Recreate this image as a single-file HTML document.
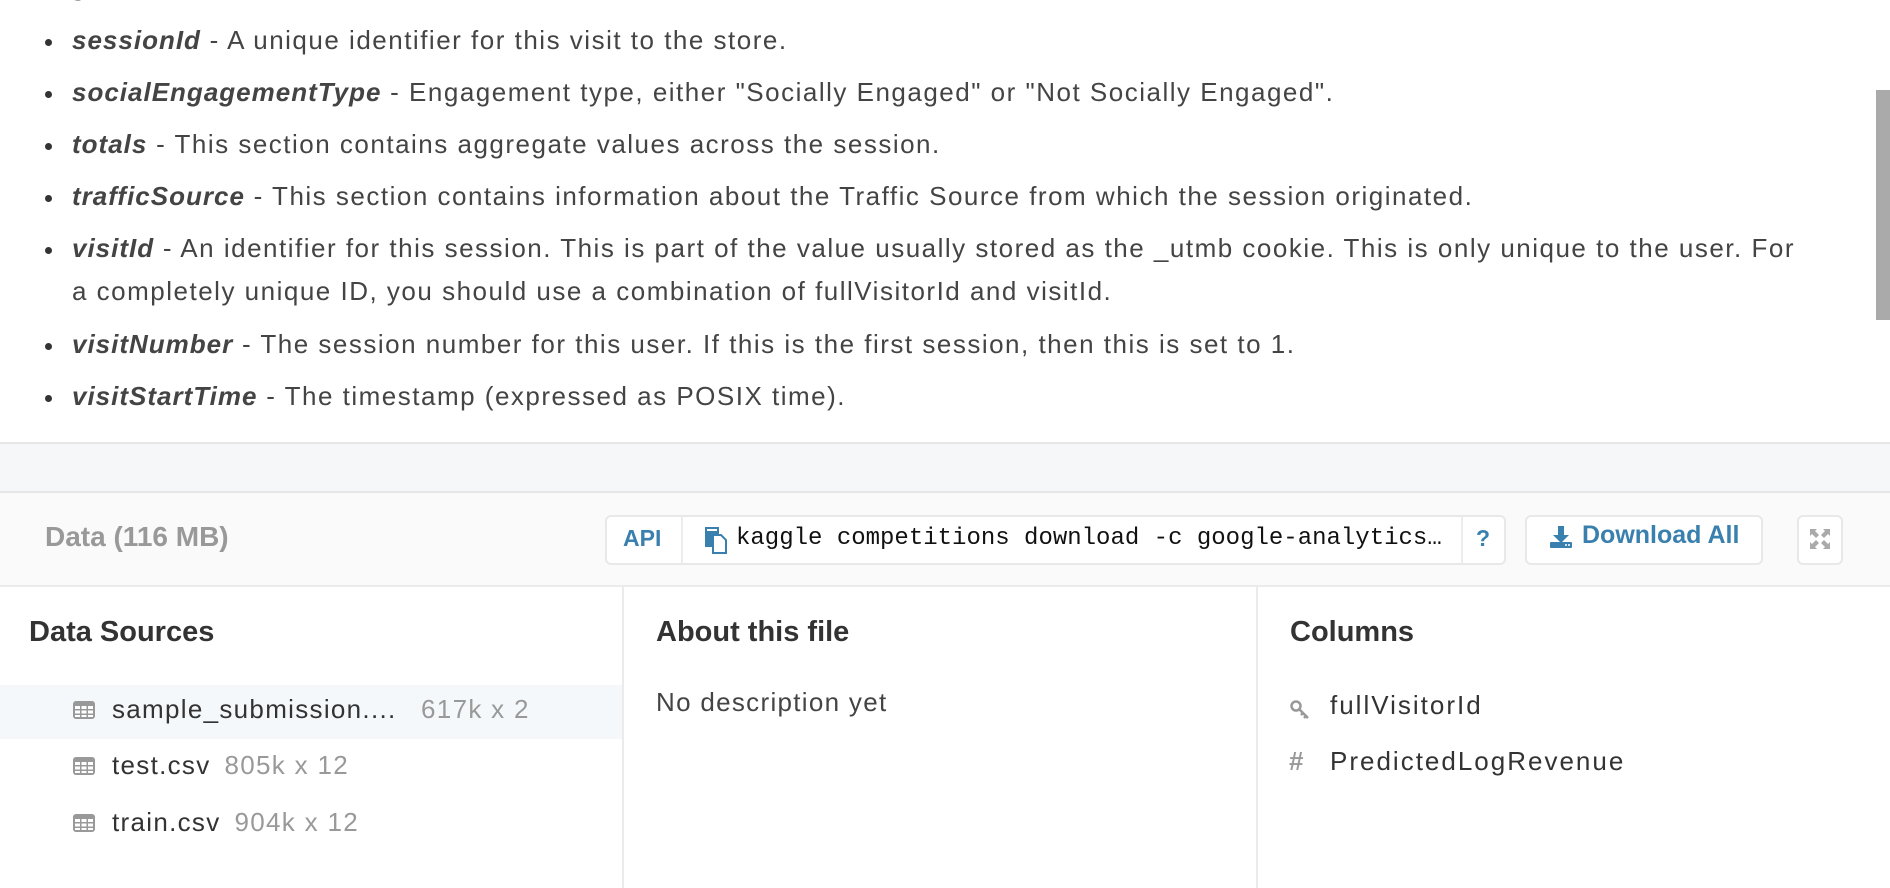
<!DOCTYPE html>
<html><head><meta charset="utf-8"><style>
*{margin:0;padding:0;box-sizing:border-box}
body{width:1890px;height:888px;overflow:hidden;background:#fff;font-family:"Liberation Sans",Arial,sans-serif;color:#444;position:relative}
.list{position:absolute;left:0;top:0;width:1870px}
.li{position:absolute;left:72px;font-size:26px;letter-spacing:1.5px;line-height:52px;white-space:nowrap;color:#444}
.li b{font-style:italic;font-weight:bold;color:#444;letter-spacing:1px}
.li:before{content:"";position:absolute;left:-27px;top:25px;width:7px;height:7px;border-radius:50%;background:#333}
.li.nb:before{display:none}
.sb{position:absolute;left:1876px;top:90px;width:14px;height:230px;background:#aaa}
.band{position:absolute;left:0;top:442px;width:1890px;height:51px;background:#f5f7f8;border-top:2px solid #e4e6e8;border-bottom:2px solid #e4e6e8}
.hdr{position:absolute;left:0;top:493px;width:1890px;height:94px;background:#fafafa;border-bottom:2px solid #ebebeb}
.title{position:absolute;left:45px;top:521px;font-size:28px;font-weight:bold;color:#999}
.box{position:absolute;top:515px;height:50px;border:2px solid #e8e8e8;border-radius:6px;background:#fff}
.blue{color:#3a80ae;font-weight:bold}
.col{position:absolute;top:587px;height:301px;border-left:2px solid #ebebeb}
h3{position:absolute;font-size:29px;font-weight:bold;color:#333}
.row{position:absolute;font-size:26px;letter-spacing:1.3px;white-space:nowrap;color:#333}
.row .g{color:#999;margin-left:14px}
</style></head><body>
<div class="list">
<div class="li nb" style="top:-40px"><b>geoNetwork</b></div>
<div class="li" style="top:14px"><b>sessionId</b> - A unique identifier for this visit to the store.</div>
<div class="li" style="top:66px"><b>socialEngagementType</b> - Engagement type, either "Socially Engaged" or "Not Socially Engaged".</div>
<div class="li" style="top:118px"><b>totals</b> - This section contains aggregate values across the session.</div>
<div class="li" style="top:170px"><b>trafficSource</b> - This section contains information about the Traffic Source from which the session originated.</div>
<div class="li" style="top:222px"><b>visitId</b> - An identifier for this session. This is part of the value usually stored as the _utmb cookie. This is only unique to the user. For</div>
<div class="li nb" style="top:265px">a completely unique ID, you should use a combination of fullVisitorId and visitId.</div>
<div class="li" style="top:318px"><b>visitNumber</b> - The session number for this user. If this is the first session, then this is set to 1.</div>
<div class="li" style="top:370px"><b>visitStartTime</b> - The timestamp (expressed as POSIX time).</div>
</div>
<div class="sb"></div>
<div class="band"></div>
<div class="hdr"></div>
<div class="title">Data (116 MB)</div>
<div class="box" style="left:605px;width:901px"></div>
<div style="position:absolute;left:681px;top:517px;width:2px;height:46px;background:#ececec"></div>
<div style="position:absolute;left:1461px;top:517px;width:2px;height:46px;background:#ececec"></div>
<div class="blue" style="position:absolute;left:623px;top:525px;font-size:23px">API</div>
<svg style="position:absolute;left:704px;top:526px" width="24" height="28" viewBox="0 0 24 28"><rect x="1" y="1" width="14" height="20" fill="#3a80ae"/><rect x="3" y="3" width="10" height="2" fill="#fff"/><path d="M9 9h8l5 5v13H9z" fill="#fff" stroke="#3a80ae" stroke-width="2"/></svg>
<div style="position:absolute;left:736px;top:525px;width:712px;overflow:hidden;text-overflow:ellipsis;font-family:'Liberation Mono',monospace;font-size:24px;color:#111;white-space:nowrap">kaggle competitions download -c google-analytics-customer-revenue-prediction</div>
<div class="blue" style="position:absolute;left:1476px;top:525px;font-size:23px">?</div>
<div class="box" style="left:1525px;width:238px"></div>
<svg style="position:absolute;left:1549px;top:525px" width="24" height="24" viewBox="0 0 24 24"><path d="M9 1h6v9h5l-8 8-8-8h5z" fill="#3a80ae"/><rect x="1" y="17" width="22" height="6" rx="1" fill="#3a80ae"/><circle cx="17" cy="20" r="1" fill="#fff"/><circle cx="20" cy="20" r="1" fill="#fff"/></svg>
<div class="blue" style="position:absolute;left:1582px;top:521px;font-size:25px">Download All</div>
<div class="box" style="left:1797px;width:46px"></div>
<svg style="position:absolute;left:1809px;top:528px" width="22" height="22" viewBox="0 0 22 22" fill="#aaa"><path d="M1 1h7l-2 2 4 4-3 3-4-4-2 2zM21 1v7l-2-2-4 4-3-3 4-4-2-2zM1 21v-7l2 2 4-4 3 3-4 4 2 2zM21 21h-7l2-2-4-4 3-3 4 4 2-2z"/></svg>
<div class="col" style="left:622px"></div>
<div class="col" style="left:1256px"></div>
<h3 style="left:29px;top:616px">Data Sources</h3>
<h3 style="left:656px;top:616px">About this file</h3>
<h3 style="left:1290px;top:616px">Columns</h3>
<div style="position:absolute;left:0;top:685px;width:622px;height:54px;background:#f5f8fb"></div>
<svg style="position:absolute;left:73px;top:701px" width="22" height="18" viewBox="0 0 22 18"><rect x="0" y="0" width="22" height="18" rx="3" fill="#999"/><g fill="#fff"><rect x="2" y="5" width="5" height="3"/><rect x="8.5" y="5" width="5" height="3"/><rect x="15" y="5" width="5" height="3"/><rect x="2" y="9.5" width="5" height="3"/><rect x="8.5" y="9.5" width="5" height="3"/><rect x="15" y="9.5" width="5" height="3"/><rect x="2" y="14" width="5" height="2"/><rect x="8.5" y="14" width="5" height="2"/><rect x="15" y="14" width="5" height="2"/></g></svg>
<svg style="position:absolute;left:73px;top:757px" width="22" height="18" viewBox="0 0 22 18"><rect x="0" y="0" width="22" height="18" rx="3" fill="#999"/><g fill="#fff"><rect x="2" y="5" width="5" height="3"/><rect x="8.5" y="5" width="5" height="3"/><rect x="15" y="5" width="5" height="3"/><rect x="2" y="9.5" width="5" height="3"/><rect x="8.5" y="9.5" width="5" height="3"/><rect x="15" y="9.5" width="5" height="3"/><rect x="2" y="14" width="5" height="2"/><rect x="8.5" y="14" width="5" height="2"/><rect x="15" y="14" width="5" height="2"/></g></svg>
<svg style="position:absolute;left:73px;top:814px" width="22" height="18" viewBox="0 0 22 18"><rect x="0" y="0" width="22" height="18" rx="3" fill="#999"/><g fill="#fff"><rect x="2" y="5" width="5" height="3"/><rect x="8.5" y="5" width="5" height="3"/><rect x="15" y="5" width="5" height="3"/><rect x="2" y="9.5" width="5" height="3"/><rect x="8.5" y="9.5" width="5" height="3"/><rect x="15" y="9.5" width="5" height="3"/><rect x="2" y="14" width="5" height="2"/><rect x="8.5" y="14" width="5" height="2"/><rect x="15" y="14" width="5" height="2"/></g></svg>
<div class="row" style="left:112px;top:694px">sample_submission.... <span class="g" style="margin-left:16px">617k x 2</span></div>
<div class="row" style="left:112px;top:750px">test.csv<span class="g">805k x 12</span></div>
<div class="row" style="left:112px;top:807px">train.csv<span class="g">904k x 12</span></div>
<div class="row" style="left:656px;top:687px;color:#444">No description yet</div>
<svg style="position:absolute;left:1290px;top:700px" width="20" height="20" viewBox="0 0 20 20"><circle cx="6" cy="6" r="4.5" fill="none" stroke="#999" stroke-width="2.5"/><path d="M9 9l9 9M13 13l-2 2M16 16l-2 2" stroke="#999" stroke-width="2.5"/></svg>
<div class="row" style="left:1330px;top:690px;letter-spacing:2px">fullVisitorId</div>
<div class="row" style="left:1289px;top:746px;color:#999;font-weight:bold">#</div>
<div class="row" style="left:1330px;top:746px;letter-spacing:2px">PredictedLogRevenue</div>
</body></html>
